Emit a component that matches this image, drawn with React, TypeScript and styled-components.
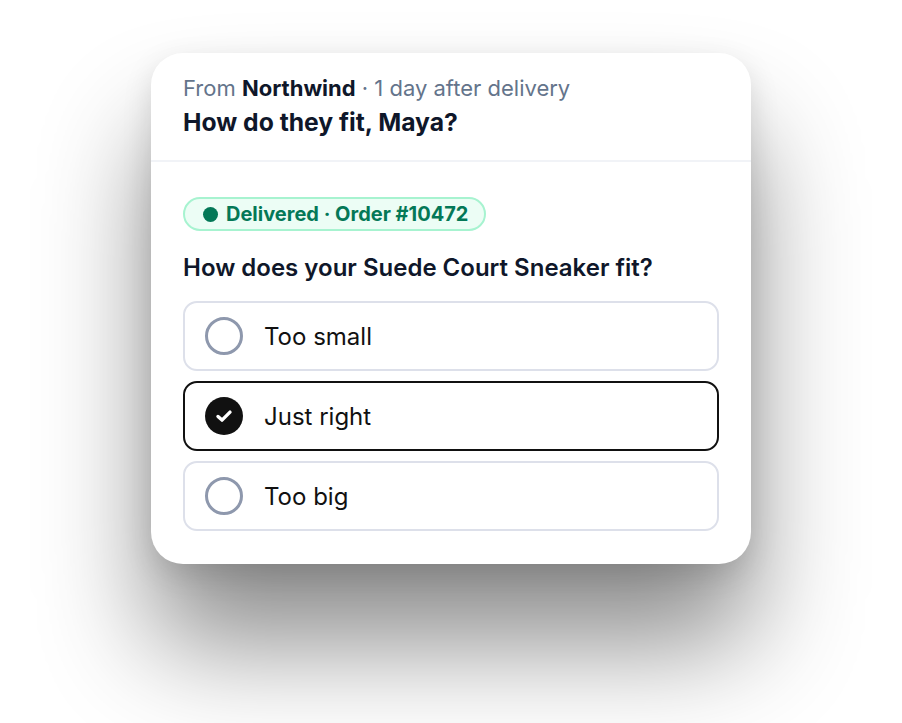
import styled, { createGlobalStyle } from "styled-components";

const GlobalStyle = createGlobalStyle`
  html, body {
    margin: 0;
    padding: 0;
    background: #ffffff;
    font-family: Inter, "Noto Sans", sans-serif;
  }
`

const Page = styled.main`
  width: 902px;
  height: 723px;
  padding-top: 53px;
  padding-left: 151px;
  box-sizing: border-box;
  overflow: hidden;
`

const Card = styled.section`
  width: 600px;
  background: #ffffff;
  border-radius: 32px;
  box-shadow: 0 80px 110px rgba(0, 0, 0, 0.45), 0 10px 30px rgba(0, 0, 0, 0.12);
  overflow: hidden;
`

const Header = styled.header`
  padding: 21px 32px 23px;
  border-bottom: 2px solid #f1f3f7;
`

const Meta = styled.p`
  margin: 0;
  font-size: 22px;
  line-height: 28px;
  color: #64748b;

  strong {
    color: #0f172a;
    font-weight: 700;
  }
`

const Title = styled.h1`
  margin: 5px 0 0;
  font-size: 24.7px;
  line-height: 30px;
  font-weight: 700;
  color: #0f172a;
`

const Body = styled.div`
  padding: 35px 32px 33px;
  display: flex;
  flex-direction: column;
  align-items: flex-start;
`

const Badge = styled.span`
  display: inline-flex;
  align-items: center;
  gap: 8px;
  height: 34px;
  box-sizing: border-box;
  padding: 0 16px 0 18px;
  border: 2px solid #a7f3d0;
  border-radius: 999px;
  background: #ecfdf5;
  color: #047857;
  font-size: 20px;
  font-weight: 700;

  &::before {
    content: "";
    width: 15px;
    height: 15px;
    border-radius: 50%;
    background: #047857;
  }
`

const Question = styled.h2`
  margin: 22px 0 0;
  font-size: 24px;
  line-height: 30px;
  font-weight: 600;
  color: #0f172a;
`

const Options = styled.div`
  margin-top: 18px;
  width: 100%;
  display: flex;
  flex-direction: column;
  gap: 10px;
`

const Option = styled.label<{ $selected: boolean }>`
  height: 70px;
  box-sizing: border-box;
  display: flex;
  align-items: center;
  gap: 21px;
  padding: 0 20px;
  border: 2px solid ${(p) => (p.$selected ? "#111111" : "#dde0ea")};
  border-radius: 14px;
  font-size: 24px;
  color: #111111;
  cursor: pointer;
`

const Radio = styled.span<{ $selected: boolean }>`
  width: 38px;
  height: 38px;
  box-sizing: border-box;
  border-radius: 50%;
  display: flex;
  align-items: center;
  justify-content: center;
  flex-shrink: 0;
  border: ${(p) => (p.$selected ? "none" : "3px solid #8e98ad")};
  background: ${(p) => (p.$selected ? "#111111" : "transparent")};
`

const options = ["Too small", "Just right", "Too big"];
const selected = "Just right";

const App = () => {
  return (
    <Page>
      <GlobalStyle />
      <Card>
        <Header>
          <Meta>
            From <strong>Northwind</strong> · 1 day after delivery
          </Meta>
          <Title>How do they fit, Maya?</Title>
        </Header>
        <Body>
          <Badge>Delivered · Order #10472</Badge>
          <Question>How does your Suede Court Sneaker fit?</Question>
          <Options>
            {options.map((item) => {
              const isOn = item === selected;
              return (
                <Option key={item} $selected={isOn}>
                  <Radio $selected={isOn}>
                    {isOn && (
                      <svg width="20" height="20" viewBox="0 0 20 20" fill="none">
                        <path
                          d="M4 10.5l4 3.6 8-8"
                          stroke="#ffffff"
                          strokeWidth="3.4"
                          strokeLinecap="round"
                          strokeLinejoin="round"
                        />
                      </svg>
                    )}
                  </Radio>
                  {item}
                </Option>
              );
            })}
          </Options>
        </Body>
      </Card>
    </Page>
  )
}

export default App
